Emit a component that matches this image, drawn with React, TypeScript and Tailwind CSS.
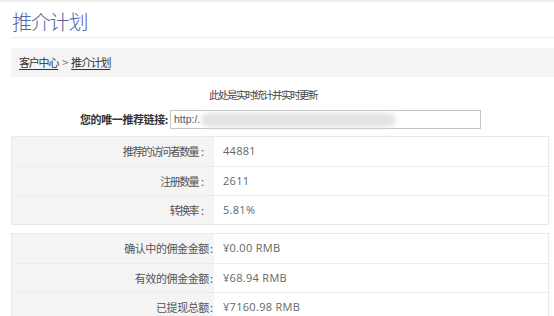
import React from "react";

const cjk = '"Noto Sans CJK SC", "Noto Sans", sans-serif';

const stats = [
  { label: "推荐的访问者数量", value: "44881" },
  { label: "注册数量", value: "2611" },
  { label: "转换率", value: "5.81%" },
];

const money = [
  { label: "确认中的佣金金额", value: "¥0.00 RMB" },
  { label: "有效的佣金金额", value: "¥68.94 RMB" },
  { label: "已提现总额", value: "¥7160.98 RMB" },
];

function StatTable({
  rows,
  labelClass,
  colonClass,
}: {
  rows: { label: string; value: string }[];
  labelClass: string;
  colonClass: string;
}) {
  return (
    <div className="w-[538px] border border-[#e9e9e9]">
      {rows.map((r, i) => (
        <div
          key={r.label}
          className={
            "grid grid-cols-[202px_1fr] h-[29px] " +
            (i > 0 ? "border-t border-[#ececec]" : "")
          }
        >
          <div
            className={
              "bg-[#f4f4f4] flex items-center justify-end whitespace-nowrap text-[11px] text-[#555] " +
              labelClass
            }
            style={{ fontFamily: cjk }}
          >
            <span>{r.label}</span>
            <span className={"tracking-normal " + colonClass}>:</span>
          </div>
          <div
            className="flex items-center pl-[9px] whitespace-nowrap text-[11px] text-[#666] tracking-[0.3px]"
            style={{ fontFamily: '"Open Sans", sans-serif' }}
          >
            {r.value}
          </div>
        </div>
      ))}
    </div>
  );
}

export default function App() {
  return (
    <div className="w-[554px] h-[316px] overflow-hidden bg-white border-t-2 border-[#ececec]">
      <div className="pl-[11px]">
        <h1
          className="h-[36px] pt-[7px] pl-[1px] text-[20px] leading-[26px] tracking-[-1.2px] font-light text-[#56639f] border-b border-[#eeeeee]"
          style={{ fontFamily: cjk }}
        >
          推介计划
        </h1>
        <div
          className="mt-[10px] h-[29px] bg-[#f4f4f4] flex items-center pl-[8px] text-[11px] tracking-[-1.2px] text-[#333]"
          style={{ fontFamily: cjk }}
        >
          <span className="underline underline-offset-2">客户中心</span>
          <span className="mx-[4px] text-[#777]">&gt;</span>
          <span className="underline underline-offset-2">推介计划</span>
        </div>
        <div
          className="mt-[11px] pl-[198px] text-[10.5px] tracking-[-1.5px] text-[#444] leading-[14px]"
          style={{ fontFamily: cjk }}
        >
          此处是实时统计并实时更新
        </div>
        <div className="mt-[8px] flex items-center h-[19px]">
          <div
            className="w-[159px] text-right pr-[2px] font-bold text-[11px] tracking-[-0.4px] text-[#333]"
            style={{ fontFamily: cjk }}
          >
            您的唯一推荐链接:
          </div>
          <div
            className="w-[311px] h-[19px] border border-[#c4c4c4] flex items-center pl-[3px] text-[10.5px] text-[#555]"
            style={{ fontFamily: '"Liberation Sans", sans-serif' }}
          >
            <span>http:/.</span>
            <span className="ml-[1px] w-[195px] h-[14px] rounded-full bg-[#e4e4e4] blur-[2px]" />
          </div>
        </div>
        <div className="mt-[7px]">
          <StatTable
            rows={stats}
            labelClass="pr-[10px] tracking-[-1.6px]"
            colonClass="ml-[3px]"
          />
        </div>
        <div className="mt-[8px]">
          <StatTable
            rows={money}
            labelClass="pr-[1px] tracking-[-0.4px]"
            colonClass="ml-[1px]"
          />
        </div>
      </div>
    </div>
  );
}
